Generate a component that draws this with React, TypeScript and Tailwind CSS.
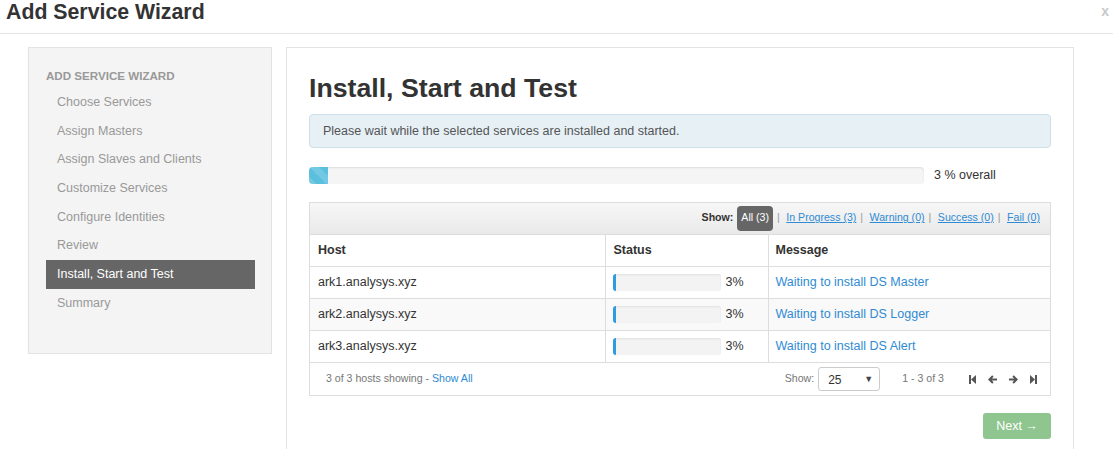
import React from 'react'

const steps = [
  'Choose Services',
  'Assign Masters',
  'Assign Slaves and Clients',
  'Customize Services',
  'Configure Identities',
  'Review',
  'Install, Start and Test',
  'Summary',
]

const hosts = [
  { name: 'ark1.analysys.xyz', msg: 'Waiting to install DS Master' },
  { name: 'ark2.analysys.xyz', msg: 'Waiting to install DS Logger' },
  { name: 'ark3.analysys.xyz', msg: 'Waiting to install DS Alert' },
]

const filters = ['In Progress (3)', 'Warning (0)', 'Success (0)', 'Fail (0)']

function StepIcon({ dir }: { dir: 'first' | 'last' }) {
  return (
    <svg width="7" height="9" viewBox="0 0 7 9" fill="#555">
      {dir === 'first' ? (
        <>
          <rect x="0" y="0" width="2" height="9" />
          <path d="M7 0v9L2 4.5z" />
        </>
      ) : (
        <>
          <rect x="5" y="0" width="2" height="9" />
          <path d="M0 0v9l5-4.5z" />
        </>
      )}
    </svg>
  )
}

function ArrowIcon({ dir }: { dir: 'left' | 'right' }) {
  return (
    <svg width="9" height="9" viewBox="0 0 9 9" fill="#555">
      {dir === 'left' ? (
        <path d="M0 4.5L4.2 0.3 5.6 1.7 3.8 3.5H9v2H3.8l1.8 1.8-1.4 1.4z" />
      ) : (
        <path d="M9 4.5L4.8 0.3 3.4 1.7 5.2 3.5H0v2h5.2L3.4 7.3l1.4 1.4z" />
      )}
    </svg>
  )
}

export default function App() {
  return (
    <div className="w-[1113px] h-[449px] overflow-hidden bg-white text-[#333] font-['Liberation_Sans',Arial,sans-serif]">
      {/* Header */}
      <div className="h-[34px] border-b border-[#e5e5e5] flex items-start justify-between pl-[6px] pr-[4px]">
        <h1 className="text-[21.3px] leading-[24px] font-bold text-[#333]">Add Service Wizard</h1>
        <span className="text-[14px] leading-[22px] font-bold text-[#c8c8c8]">x</span>
      </div>

      <div className="flex items-start gap-[14px] pl-[28px] pt-[13px]">
        {/* Sidebar */}
        <div className="w-[244px] bg-[#f4f4f4] border border-[#e3e3e3] pt-[16px] pb-[35px] pl-[17px] pr-[16px]">
          <div className="text-[11.6px] leading-[24px] font-bold text-[#999] uppercase">Add Service Wizard</div>
          {steps.map((s, i) => (
            <div
              key={s}
              className={`h-[28.7px] flex items-center pl-[11px] text-[12.5px] ${
                i === 6 ? 'bg-[#666] text-white' : 'text-[#999]'
              }`}
            >
              {s}
            </div>
          ))}
        </div>

        {/* Main panel */}
        <div className="w-[788px] h-[420px] border border-[#e3e3e3] pl-[22px] pr-[22px] pt-[24px]">
          <h2 className="text-[26.7px] leading-[32px] font-bold text-[#333]">Install, Start and Test</h2>

          <div className="mt-[10px] h-[34px] flex items-center bg-[#e6f0f5] border border-[#cfe0ea] rounded-[4px] px-[13px] text-[12.5px] text-[#555]">
            Please wait while the selected services are installed and started.
          </div>

          <div className="mt-[18px] flex items-center">
            <div className="w-[615px] h-[17px] rounded-[4px] bg-[#f5f5f5] shadow-[inset_0_1px_2px_rgba(0,0,0,0.1)] overflow-hidden">
              <div className="w-[19px] h-full bg-[#5bc0de] bg-[linear-gradient(45deg,rgba(255,255,255,0.15)_25%,transparent_25%,transparent_50%,rgba(255,255,255,0.15)_50%,rgba(255,255,255,0.15)_75%,transparent_75%,transparent)] bg-[length:20px_20px]" />
            </div>
            <span className="ml-[10px] text-[12.5px] text-[#333]">3 % overall</span>
          </div>

          {/* Table */}
          <div className="mt-[17px] w-[742px] border border-[#ddd]">
            <div className="h-[32px] bg-[linear-gradient(#f7f7f7,#e9e9e9)] border-b border-[#ddd] flex items-center justify-end pr-[10px] text-[10.6px]">
              <span className="font-bold text-[#333] mr-[4px]">Show:</span>
              <span className="h-[25px] px-[4px] flex items-center rounded-[4px] bg-[#666] text-white">All (3)</span>
              {filters.map((f) => (
                <React.Fragment key={f}>
                  <span className="text-[#999] ml-[4px] mr-[6.5px]">|</span>
                  <span className="text-[#2f8bd3] underline">{f}</span>
                </React.Fragment>
              ))}
            </div>

            <table className="w-full border-collapse text-[12.5px]">
              <colgroup>
                <col className="w-[295px]" />
                <col className="w-[163px]" />
                <col />
              </colgroup>
              <thead>
                <tr className="h-[32px] border-b border-[#ddd]">
                  <th className="text-left font-bold pl-[8px]">Host</th>
                  <th className="text-left font-bold pl-[8px] border-l border-[#ddd]">Status</th>
                  <th className="text-left font-bold pl-[7px] border-l border-[#ddd]">Message</th>
                </tr>
              </thead>
              <tbody>
                {hosts.map((h, i) => (
                  <tr key={h.name} className={`h-[32px] border-b border-[#ddd] ${i === 1 ? 'bg-[#f9f9f9]' : ''}`}>
                    <td className="pl-[8px] text-[#333]">{h.name}</td>
                    <td className="pl-[7px] border-l border-[#ddd]">
                      <div className="flex items-center">
                        <div className="w-[108px] h-[17px] rounded-[3px] bg-[#f3f3f3] shadow-[inset_0_1px_2px_rgba(0,0,0,0.08)] overflow-hidden">
                          <div className="w-[3px] h-full bg-[#2d9ce0]" />
                        </div>
                        <span className="ml-[5px] text-[#333]">3%</span>
                      </div>
                    </td>
                    <td className="pl-[7px] border-l border-[#ddd] text-[#2f8bd3]">{h.msg}</td>
                  </tr>
                ))}
              </tbody>
            </table>

            <div className="h-[32px] flex items-center pl-[16px] pr-[13px] text-[10.6px]">
              <span className="text-[#777]">
                3 of 3 hosts showing - <span className="text-[#2f8bd3]">Show All</span>
              </span>
              <div className="ml-auto flex items-center">
                <span className="text-[#777]">Show:</span>
                <div className="ml-[4px] w-[62px] h-[24px] border border-[#ccc] rounded-[3px] flex items-center justify-between pl-[9px] pr-[6px] text-[12px] text-[#333]">
                  <span className="mt-[2px]">25</span>
                  <span className="text-[9px] text-[#444]">▼</span>
                </div>
                <span className="ml-[22px] text-[#777]">1 - 3 of 3</span>
                <div className="ml-[25px] flex items-center gap-[12px]">
                  <StepIcon dir="first" />
                  <ArrowIcon dir="left" />
                  <ArrowIcon dir="right" />
                  <StepIcon dir="last" />
                </div>
              </div>
            </div>
          </div>

          <div className="mt-[17px] w-[742px] flex justify-end">
            <button className="w-[68px] h-[26px] rounded-[3px] bg-[#8fc58f] text-white text-[12.5px]">
              Next →
            </button>
          </div>
        </div>
      </div>
    </div>
  )
}
